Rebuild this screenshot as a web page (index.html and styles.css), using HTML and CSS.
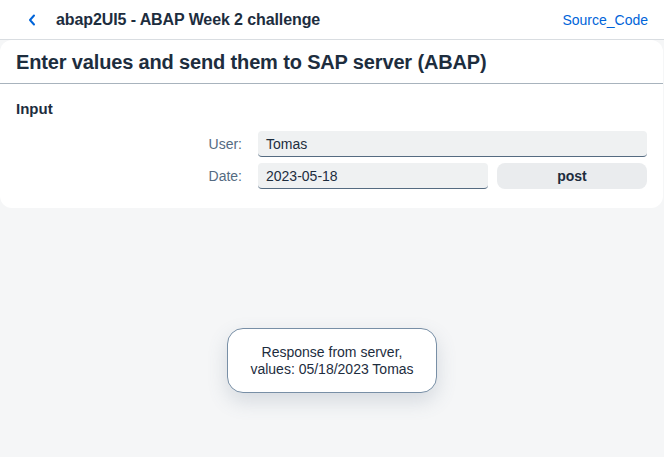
FILE: index.html
```html
<!DOCTYPE html>
<html>
<head>
<meta charset="utf-8">
<link rel="stylesheet" href="styles.css">
</head>
<body>
<div class="app">
  <header class="shell">
    <div class="shell-left">
      <span class="back">
        <svg width="10" height="12" viewBox="0 0 10 12"><path d="M7 1.5 L3 6 L7 10.5" fill="none" stroke="#0064d9" stroke-width="2" stroke-linecap="round" stroke-linejoin="round"/></svg>
      </span>
      <span class="shell-title">abap2UI5 - ABAP Week 2 challenge</span>
    </div>
    <a class="link">Source_Code</a>
  </header>
  <main class="page">
    <section class="card">
      <h1 class="card-title">Enter values and send them to SAP server (ABAP)</h1>
      <div class="card-body">
        <h2 class="group-title">Input</h2>
        <div class="form">
          <label class="lbl">User:</label>
          <div class="input wide">Tomas</div>
          <label class="lbl">Date:</label>
          <div class="input">2023-05-18</div>
          <button class="btn">post</button>
        </div>
      </div>
    </section>
  </main>
  <div class="toast">Response from server,<br>values: 05/18/2023 Tomas</div>
</div>
</body>
</html>
```
FILE: styles.css
```css
html, body {
  margin: 0;
  padding: 0;
  height: 100%;
}
body {
  font-family: "Liberation Sans", Arial, sans-serif;
  color: #1d2d3e;
  background: #f5f6f7;
}
.app {
  position: relative;
  height: 457px;
  overflow: hidden;
}
.shell {
  height: 39px;
  background: #fff;
  border-bottom: 1px solid #d9dde1;
  display: flex;
  align-items: center;
  justify-content: space-between;
  padding: 0 16px 0 27px;
}
.shell-left {
  display: flex;
  align-items: center;
}
.back {
  display: flex;
  width: 12px;
  margin-right: 17px;
}
.shell-title {
  font-size: 16px;
  font-weight: bold;
  letter-spacing: -0.1px;
}
.link {
  color: #0064d9;
  font-size: 14px;
}
.card {
  background: #fff;
  border-radius: 12px;
  margin-right: 1px;
}
.card-title {
  margin: 0;
  height: 44px;
  box-sizing: border-box;
  padding: 1px 16px 0 16px;
  display: flex;
  align-items: center;
  font-size: 20px;
  font-weight: bold;
  letter-spacing: -0.15px;
  border-bottom: 1px solid #a8b3bd;
}
.card-body {
  padding: 16px 16px 19px 16px;
}
.group-title {
  margin: 0;
  font-size: 15px;
  font-weight: bold;
  line-height: 18px;
}
.form {
  margin-top: 13px;
  display: grid;
  grid-template-columns: 1fr 230px 150px;
  column-gap: 9px;
  row-gap: 6px;
  align-items: center;
}
.lbl {
  font-size: 14px;
  color: #556b82;
  text-align: right;
  padding-right: 7px;
}
.input {
  height: 26px;
  box-sizing: border-box;
  background: #eff1f2;
  border-radius: 4px;
  border-bottom: 1px solid #556b81;
  font-size: 14px;
  padding: 0 8px;
  display: flex;
  align-items: center;
}
.input.wide {
  grid-column: 2 / 4;
}
.btn {
  height: 26px;
  border: none;
  border-radius: 8px;
  background: #eaecee;
  font-family: inherit;
  font-size: 14px;
  font-weight: bold;
  color: #1d2d3e;
}
.toast {
  position: absolute;
  left: 50%;
  bottom: 64px;
  transform: translateX(-50%);
  width: 210px;
  height: 65px;
  box-sizing: border-box;
  background: #fff;
  border: 1px solid #788fa6;
  border-radius: 16px;
  box-shadow: 0 8px 20px rgba(85, 107, 130, 0.2);
  display: flex;
  align-items: center;
  justify-content: center;
  text-align: center;
  font-size: 14px;
  line-height: 17px;
}
```
